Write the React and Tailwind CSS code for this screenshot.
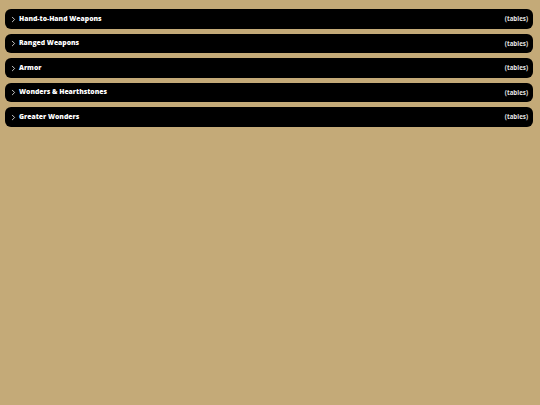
import React from 'react';
import { ChevronRight } from 'lucide-react';

const sections = [
    'Hand-to-Hand Weapons',
    'Ranged Weapons',
    'Armor',
    'Wonders & Hearthstones',
    'Greater Wonders',
];

export default function App() {
    return (
        <div className="min-h-screen bg-[#c4aa78] pt-[9px] pl-[5px] pr-[7px] font-['Open_Sans',sans-serif]">
            <div className="flex flex-col gap-[5px]">
                {sections.map((name) => (
                    <div
                        key={name}
                        className="h-[19.5px] flex items-center justify-between bg-black rounded-[6px] pl-[4px] pr-[5px] pt-[1px] text-white"
                    >
                        <div className="flex items-center gap-[1px]">
                            <ChevronRight size={9} strokeWidth={2.4} className="text-[#dddddd]" />
                            <span className="text-[6.8px] font-extrabold leading-none">{name}</span>
                        </div>
                        <span className="text-[6.2px] font-bold text-[#e5e5e5] leading-none">(tables)</span>
                    </div>
                ))}
            </div>
        </div>
    );
}
